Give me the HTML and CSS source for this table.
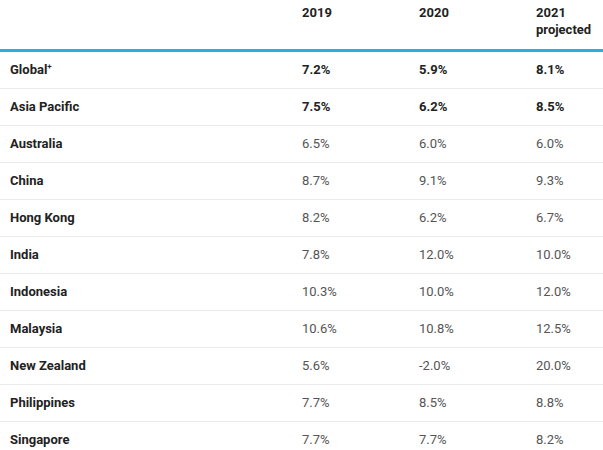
FILE: index.html
```html
<!DOCTYPE html>
<html>
<head>
<meta charset="utf-8">
<link rel="stylesheet" href="styles.css">
</head>
<body>
<table class="rates">
  <colgroup>
    <col class="c-label"><col class="c-val"><col class="c-val"><col class="c-last">
  </colgroup>
  <thead>
    <tr>
      <th></th><th>2019</th><th>2020</th><th>2021<br>projected</th>
    </tr>
  </thead>
  <tbody>
    <tr class="strong"><th>Global<sup>+</sup></th><td>7.2%</td><td>5.9%</td><td>8.1%</td></tr>
    <tr class="strong"><th>Asia Pacific</th><td>7.5%</td><td>6.2%</td><td>8.5%</td></tr>
    <tr><th>Australia</th><td>6.5%</td><td>6.0%</td><td>6.0%</td></tr>
    <tr><th>China</th><td>8.7%</td><td>9.1%</td><td>9.3%</td></tr>
    <tr><th>Hong Kong</th><td>8.2%</td><td>6.2%</td><td>6.7%</td></tr>
    <tr><th>India</th><td>7.8%</td><td>12.0%</td><td>10.0%</td></tr>
    <tr><th>Indonesia</th><td>10.3%</td><td>10.0%</td><td>12.0%</td></tr>
    <tr><th>Malaysia</th><td>10.6%</td><td>10.8%</td><td>12.5%</td></tr>
    <tr><th>New Zealand</th><td>5.6%</td><td>-2.0%</td><td>20.0%</td></tr>
    <tr><th>Philippines</th><td>7.7%</td><td>8.5%</td><td>8.8%</td></tr>
    <tr><th>Singapore</th><td>7.7%</td><td>7.7%</td><td>8.2%</td></tr>
  </tbody>
</table>
</body>
</html>
```
FILE: styles.css
```css
html, body {
  margin: 0;
  padding: 0;
  background: #fff;
}
body {
  font-family: Roboto, "Liberation Sans", Arial, sans-serif;
  font-size: 13px;
  color: #222;
}
.rates {
  width: 603px;
  border-collapse: collapse;
  table-layout: fixed;
}
.c-label { width: 292px; }
.c-val { width: 117px; }
.c-last { width: 77px; }
.rates thead th {
  height: 45px;
  padding: 4px 0 0 10px;
  text-align: left;
  vertical-align: top;
  font-weight: 700;
  line-height: 17px;
  color: #222;
  border-bottom: 3px solid #2aaee0;
}
.rates tbody th,
.rates tbody td {
  height: 36px;
  padding: 0 0 0 10px;
  text-align: left;
  vertical-align: middle;
  border-bottom: 1px solid #ececec;
  line-height: 16px;
}
.rates tbody th {
  font-weight: 700;
  color: #222;
}
.rates tbody td {
  font-weight: 400;
  color: #555;
}
.rates tbody tr.strong td {
  font-weight: 700;
  color: #222;
}
sup {
  font-size: 8px;
  line-height: 0;
  vertical-align: 5px;
}
```
